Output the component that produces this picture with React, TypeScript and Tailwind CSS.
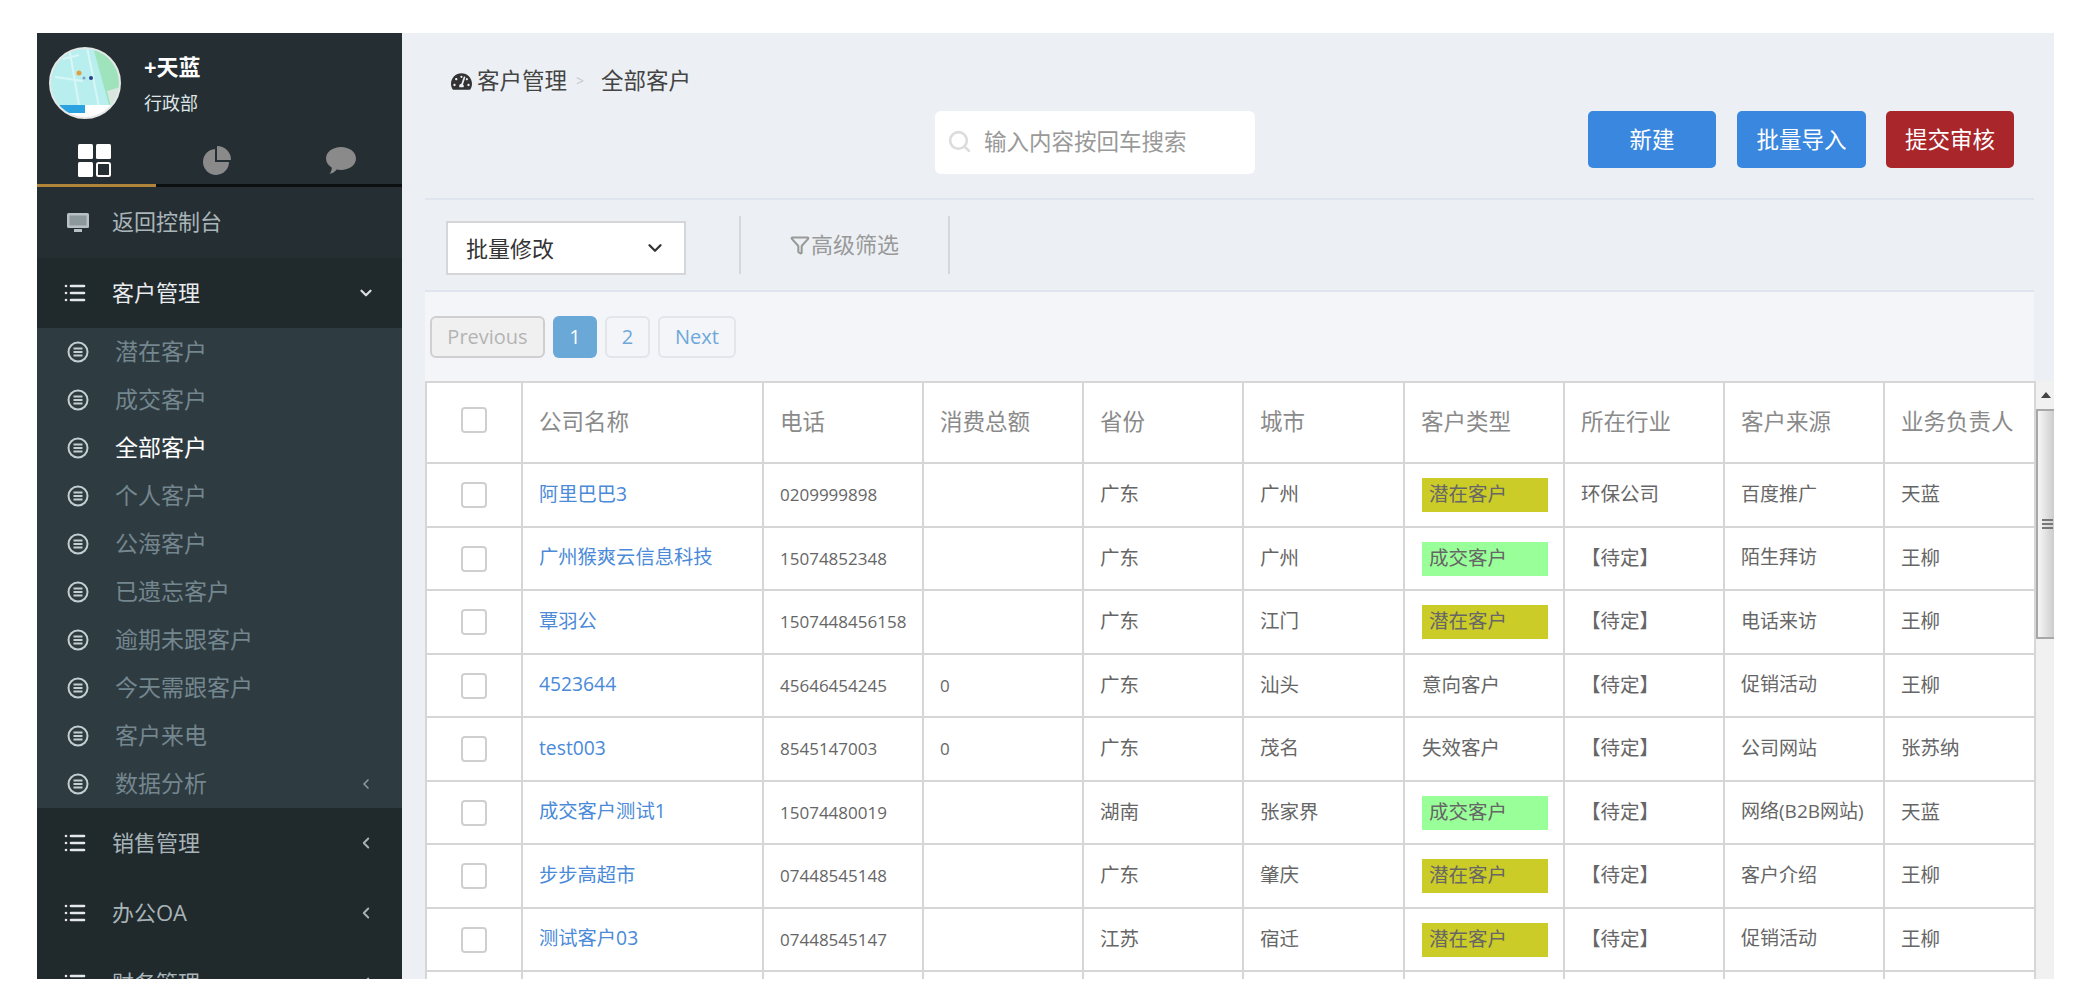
import { ChevronDown, ChevronLeft, Filter, List, Search } from 'lucide-react';
import { FaTachometerAlt } from 'react-icons/fa';

interface Customer {
  name: string;
  phone: string;
  total: string;
  province: string;
  city: string;
  type: string;
  industry: string;
  source: string;
  owner: string;
}

const subMenu = ['潜在客户', '成交客户', '全部客户', '个人客户', '公海客户', '已遗忘客户', '逾期未跟客户', '今天需跟客户', '客户来电', '数据分析'];

const customers: Customer[] = [
  { name: '阿里巴巴3', phone: '0209999898', total: '', province: '广东', city: '广州', type: '潜在客户', industry: '环保公司', source: '百度推广', owner: '天蓝' },
  { name: '广州猴爽云信息科技', phone: '15074852348', total: '', province: '广东', city: '广州', type: '成交客户', industry: '【待定】', source: '陌生拜访', owner: '王柳' },
  { name: '覃羽公', phone: '1507448456158', total: '', province: '广东', city: '江门', type: '潜在客户', industry: '【待定】', source: '电话来访', owner: '王柳' },
  { name: '4523644', phone: '45646454245', total: '0', province: '广东', city: '汕头', type: '意向客户', industry: '【待定】', source: '促销活动', owner: '王柳' },
  { name: 'test003', phone: '8545147003', total: '0', province: '广东', city: '茂名', type: '失效客户', industry: '【待定】', source: '公司网站', owner: '张苏纳' },
  { name: '成交客户测试1', phone: '15074480019', total: '', province: '湖南', city: '张家界', type: '成交客户', industry: '【待定】', source: '网络(B2B网站)', owner: '天蓝' },
  { name: '步步高超市', phone: '07448545148', total: '', province: '广东', city: '肇庆', type: '潜在客户', industry: '【待定】', source: '客户介绍', owner: '王柳' },
  { name: '测试客户03', phone: '07448545147', total: '', province: '江苏', city: '宿迁', type: '潜在客户', industry: '【待定】', source: '促销活动', owner: '王柳' },
];

const columns = ['公司名称', '电话', '消费总额', '省份', '城市', '客户类型', '所在行业', '客户来源', '业务负责人'];

function Avatar() {
  return (
    <svg width="72" height="72" viewBox="0 0 72 72" className="shrink-0">
      <defs>
        <clipPath id="avatar-clip">
          <circle cx="36" cy="36" r="35" />
        </clipPath>
      </defs>
      <g clipPath="url(#avatar-clip)">
        <rect width="72" height="72" fill="#b9eeee" />
        <path d="M44 0 L72 0 L72 50 L60 58 Z" fill="#9fe3bd" />
        <path d="M58 44 L72 40 L72 60 L62 60 Z" fill="#d9e6df" />
        <path d="M14 12 L30 8 M6 30 L34 34 M20 0 L30 58 M38 0 L50 60" stroke="#d8f6f6" strokeWidth="2" fill="none" />
        <circle cx="30" cy="26" r="2.5" fill="#e0a040" />
        <circle cx="42" cy="31" r="2" fill="#27408b" />
        <circle cx="35" cy="31" r="1.5" fill="#7aa0c8" />
        <rect y="58" width="72" height="14" fill="#ffffff" />
        <rect x="6" y="58" width="30" height="8" fill="#2aa3e0" />
      </g>
      <circle cx="36" cy="36" r="35" fill="none" stroke="#e4e8e6" strokeWidth="2" />
    </svg>
  );
}

function SubIcon() {
  return (
    <svg width="22" height="22" viewBox="0 0 22 22" fill="none" stroke="#c4cdd0" strokeWidth="2" className="shrink-0">
      <circle cx="11" cy="11" r="9.5" />
      <path d="M6.5 7.5h9M6.5 11h9M6.5 14.5h9" />
    </svg>
  );
}

function CheckBox() {
  return <div className="mx-auto h-[26px] w-[26px] rounded-[4px] border-2 border-[#cfcfcf] bg-white" />;
}

function GroupRow({ label, open }: { label: string; open?: boolean }) {
  return (
    <div className={`flex h-[70px] shrink-0 items-center bg-[#20292c] pl-[26px] pr-[27px] text-[22px] ${open ? 'text-[#e8ecee]' : 'text-[#a8b4b8]'}`}>
      <List size={24} strokeWidth={2.6} className="mr-[25px] shrink-0 text-[#e4e8ea]" />
      <span className="mb-[2px] flex-1">{label}</span>
      {open ? <ChevronDown size={18} strokeWidth={3} className="text-[#d8dde0]" /> : <ChevronLeft size={18} strokeWidth={2.5} className="text-[#a8b4b8]" />}
    </div>
  );
}

function Sidebar() {
  return (
    <aside className="flex w-[365px] shrink-0 flex-col overflow-hidden bg-[#252f33]">
      <div className="flex h-[102px] shrink-0 pl-[12px] pt-[14px]">
        <Avatar />
        <div className="ml-[23px]">
          <div className="mt-[5px] text-[22px] font-bold leading-[28px] text-white">+天蓝</div>
          <div className="mt-[11px] text-[18px] leading-[24px] text-[#dfe4e6]">行政部</div>
        </div>
      </div>
      <div className="flex h-[52px] shrink-0 border-b-[3px] border-[#0c0f10]">
        <div className="-mb-[3px] flex w-[119px] justify-center border-b-[3px] border-[#b0853a] pr-[5px] pt-[9px]">
          <svg width="33" height="33" viewBox="0 0 33 33">
            <rect x="0" y="0" width="15" height="15" rx="1.5" fill="#fff" />
            <rect x="18" y="0" width="15" height="15" rx="1.5" fill="#fff" />
            <rect x="0" y="18" width="15" height="15" rx="1.5" fill="#fff" />
            <rect x="19" y="19" width="13" height="13" rx="1.5" fill="none" stroke="#fff" strokeWidth="2" />
          </svg>
        </div>
        <div className="ml-[46px] pt-[11px]">
          <svg width="29" height="29" viewBox="0 0 29 29">
            <path d="M13 3 A13 13 0 1 0 27 16 L13 16 Z" fill="#8a8a8a" />
            <path d="M15 0 A14 14 0 0 1 29 14 L15 14 Z" fill="#8a8a8a" />
          </svg>
        </div>
        <div className="ml-[95px] pt-[12px]">
          <svg width="30" height="27" viewBox="0 0 30 27">
            <path d="M15 0 C23.3 0 30 5 30 11.500 C30 18 23.300 23 15 23 C13.500 23 12 22.800 10.700 22.500 C9 24.800 6.500 26.500 3.500 26.800 C5 25 5.800 22.800 5.900 20.700 C2.300 18.500 0 15.200 0 11.500 C0 5 6.700 0 15 0 Z" fill="#8a8a8a" />
          </svg>
        </div>
      </div>
      <div className="flex h-[71px] shrink-0 items-center pl-[30px] text-[22px] text-[#aab5b9]">
        <svg width="22" height="22" viewBox="0 0 22 22" className="mr-[23px] shrink-0">
          <rect x="0" y="1" width="22" height="15" rx="1.500" fill="#b8c0c4" />
          <rect x="2.500" y="3.500" width="17" height="10" fill="#8d989d" />
          <rect x="7" y="17" width="8" height="3" fill="#b8c0c4" />
        </svg>
        <span className="mb-[2px]">返回控制台</span>
      </div>
      <GroupRow label="客户管理" open />
      <div className="shrink-0 bg-[#2e3b41]">
        {subMenu.map((item, i) => (
          <div key={item} className={`flex h-[48px] items-center pl-[30px] pr-[28px] text-[23px] ${i === 2 ? 'text-white' : 'text-[#74868e]'}`}>
            <SubIcon />
            <span className="mb-[2px] ml-[26px] flex-1">{item}</span>
            {i === 9 && <ChevronLeft size={16} strokeWidth={2.5} className="text-[#8a9aa1]" />}
          </div>
        ))}
      </div>
      <GroupRow label="销售管理" />
      <GroupRow label="办公OA" />
      <GroupRow label="财务管理" />
    </aside>
  );
}

function Toolbar() {
  return (
    <>
      <div className="h-[167px] shrink-0 border-b-2 border-[#dfe5ee]">
        <div className="mt-[36px] flex h-[24px] items-center text-[22.500px] leading-[24px] text-[#444]">
          <FaTachometerAlt size={21} className="ml-[26px] mr-[5px] shrink-0 text-[#333]" />
          <span>客户管理</span>
          <span className="mx-[9px] text-[14px] text-[#c4c8cc]">&gt;</span>
          <span className="ml-[8px]">全部客户</span>
        </div>
        <div className="mt-[18px] flex items-start pr-[20px]">
          <div className="ml-[510px] flex h-[63px] w-[320px] items-center rounded-[6px] bg-white pb-[2px] pl-[12px]">
            <Search size={25} strokeWidth={2.5} className="shrink-0 text-[#dcdcdc]" />
            <input placeholder="输入内容按回车搜索" className="ml-[12px] w-[270px] bg-white text-[22.500px] outline-none placeholder:text-[#999]" />
          </div>
          <button className="ml-auto h-[57px] w-[128px] rounded-[5px] bg-[#3a87e0] text-[22.500px] text-white">新建</button>
          <button className="ml-[21px] h-[57px] w-[129px] rounded-[5px] bg-[#3a87e0] text-[22.500px] text-white">批量导入</button>
          <button className="ml-[20px] h-[57px] w-[128px] rounded-[5px] bg-[#a9262a] text-[22.500px] text-white">提交审核</button>
        </div>
      </div>
      <div className="flex h-[92px] shrink-0 border-b-2 border-[#dfe5ee]">
        <div className="ml-[21px] mt-[21px] flex h-[54px] w-[240px] items-center justify-between border-2 border-[#d4d6d8] bg-white pl-[18px] pr-[18px] text-[22px] text-[#333]">
          批量修改
          <ChevronDown size={22} strokeWidth={2.5} className="text-[#333]" />
        </div>
        <div className="ml-[53px] mt-[16px] h-[58px] w-[2px] bg-[#d4d8dc]" />
        <div className="flex h-[90px] w-[207px] items-center justify-center pb-[1px] text-[22px] text-[#999]">
          <Filter size={20} strokeWidth={2.5} className="mr-[1px] text-[#999]" />
          高级筛选
        </div>
        <div className="mt-[16px] h-[58px] w-[2px] bg-[#d4d8dc]" />
      </div>
    </>
  );
}

function Pagination() {
  return (
    <div className="flex h-[89px] shrink-0 items-start gap-[8px] bg-[#f3f5f9] pl-[5px] pt-[24px] font-['Open_Sans',sans-serif] text-[20px]">
      <div className="flex h-[42px] w-[115px] items-center justify-center rounded-[6px] border-2 border-[#cfcfcf] bg-[#f0f0f0] text-[#b4b4b4]">Previous</div>
      <div className="flex h-[42px] w-[44px] items-center justify-center rounded-[6px] bg-[#6aa9d7] text-white">1</div>
      <div className="flex h-[42px] w-[45px] items-center justify-center rounded-[6px] border-2 border-[#e2e5ea] text-[#6ea8d8]">2</div>
      <div className="flex h-[42px] w-[78px] items-center justify-center rounded-[6px] border-2 border-[#e2e5ea] text-[#6ea8d8]">Next</div>
    </div>
  );
}

function CustomerTable() {
  return (
    <table className="w-[1609px] shrink-0 table-fixed border-collapse self-start bg-white text-[19.500px] text-[#666]">
      <colgroup>
        <col className="w-[96px]" />
        <col className="w-[241px]" />
        <col className="w-[160px]" />
        <col className="w-[160px]" />
        <col className="w-[160px]" />
        <col className="w-[161px]" />
        <col className="w-[160px]" />
        <col className="w-[160px]" />
        <col className="w-[160px]" />
        <col className="w-[151px]" />
      </colgroup>
      <thead>
        <tr className="h-[81px]">
          <th className="border-2 border-[#d6d6d6] pb-[6px]">
            <CheckBox />
          </th>
          {columns.map(col => (
            <th key={col} className="overflow-hidden whitespace-nowrap border-2 border-[#d6d6d6] pb-[2px] pl-[16px] text-left text-[22.500px] font-normal text-[#8a8a8a]">
              {col}
            </th>
          ))}
        </tr>
      </thead>
      <tbody>
        {customers.map((row, i) => (
          <tr key={row.name} className={i % 2 === 0 ? 'h-[64px]' : 'h-[63px]'}>
            <td className="border-2 border-[#d6d6d6]">
              <CheckBox />
            </td>
            <td className="whitespace-nowrap border-2 border-[#d6d6d6] pb-[2px] pl-[16px] text-[19.300px] text-[#4a8ad8]">{row.name}</td>
            <td className="whitespace-nowrap border-2 border-[#d6d6d6] pl-[16px] font-['Open_Sans',sans-serif] text-[17px]">{row.phone}</td>
            <td className="border-2 border-[#d6d6d6] pl-[16px] font-['Open_Sans',sans-serif] text-[17px]">{row.total}</td>
            <td className="border-2 border-[#d6d6d6] pb-[2px] pl-[16px]">{row.province}</td>
            <td className="border-2 border-[#d6d6d6] pb-[2px] pl-[16px]">{row.city}</td>
            <td className="border-2 border-[#d6d6d6] pl-[17px]">
              {row.type === '潜在客户' && <div className="flex h-[34px] w-[126px] items-center bg-[#cccc28] pb-[2px] pl-[7px]">{row.type}</div>}
              {row.type === '成交客户' && <div className="flex h-[34px] w-[126px] items-center bg-[#99ff99] pb-[2px] pl-[7px]">{row.type}</div>}
              {row.type !== '潜在客户' && row.type !== '成交客户' && <span className="block pb-[2px]">{row.type}</span>}
            </td>
            <td className="border-2 border-[#d6d6d6] pb-[2px] pl-[16px]">{row.industry}</td>
            <td className="whitespace-nowrap border-2 border-[#d6d6d6] pb-[2px] pl-[16px] text-[19px]">{row.source}</td>
            <td className="border-2 border-[#d6d6d6] pb-[2px] pl-[16px]">{row.owner}</td>
          </tr>
        ))}
        <tr className="h-[40px]">
          {Array.from({ length: 10 }, (_, i) => (
            <td key={i} className="border-2 border-[#d6d6d6]" />
          ))}
        </tr>
      </tbody>
    </table>
  );
}

function ScrollBar() {
  return (
    <div className="flex w-[20px] shrink-0 flex-col items-stretch bg-[#f1f1f1]">
      <div className="flex h-[28px] items-center justify-center">
        <div className="h-0 w-0 border-x-[5px] border-b-[6px] border-x-transparent border-b-[#444]" />
      </div>
      <div className="flex h-[230px] flex-col items-center justify-center gap-[2px] rounded-[1px] border-2 border-r-0 border-[#a8a8a8] bg-gradient-to-r from-[#f6f6f6] to-[#c8c8c8]">
        <div className="h-[2px] w-[11px] bg-[#777]" />
        <div className="h-[2px] w-[11px] bg-[#777]" />
        <div className="h-[2px] w-[11px] bg-[#777]" />
      </div>
    </div>
  );
}

export default function App() {
  return (
    <div className="flex h-[1006px] w-[2094px] overflow-hidden bg-white pb-[27px] pl-[37px] pr-[40px] pt-[33px] font-['Open_Sans','Noto_Sans_CJK_SC',sans-serif]">
      <Sidebar />
      <main className="flex min-w-0 flex-1 flex-col overflow-hidden bg-[#ecf0f4] pl-[23px] pr-[20px]">
        <Toolbar />
        <Pagination />
        <div className="-mr-[20px] flex min-h-0 flex-1 overflow-hidden">
          <CustomerTable />
          <ScrollBar />
        </div>
      </main>
    </div>
  );
}
